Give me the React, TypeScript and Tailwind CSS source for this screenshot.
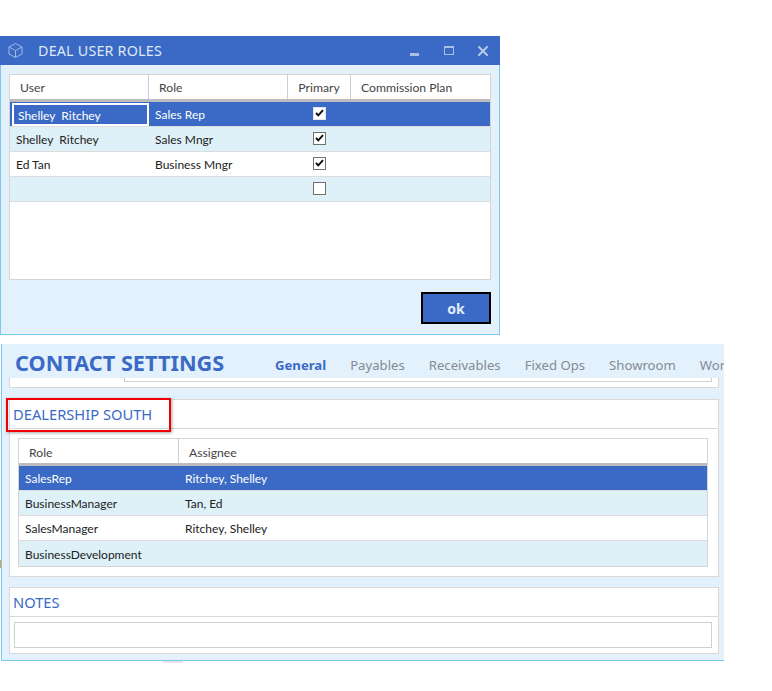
import React from "react";
import { X } from "lucide-react";

const font = { fontFamily: '"Noto Sans", sans-serif' };

const dealRows = [
  { user: "Shelley  Ritchey", role: "Sales Rep", primary: true },
  { user: "Shelley  Ritchey", role: "Sales Mngr", primary: true },
  { user: "Ed Tan", role: "Business Mngr", primary: true },
  { user: "", role: "", primary: false },
];

const contactRows = [
  { role: "SalesRep", assignee: "Ritchey, Shelley" },
  { role: "BusinessManager", assignee: "Tan, Ed" },
  { role: "SalesManager", assignee: "Ritchey, Shelley" },
  { role: "BusinessDevelopment", assignee: "" },
];

const rowBg = (i: number) =>
  i === 0 ? "bg-[#3a6ac5] text-white" : i % 2 === 1 ? "bg-[#def0f8] text-[#222]" : "bg-white text-[#222]";

const Check = ({ on, dark }: { on: boolean; dark: boolean }) => (
  <div className={`flex h-[13px] w-[13px] items-center justify-center border bg-white ${dark ? "border-[#dfe6f3]" : "border-[#707070]"}`}>
    {on && (
      <svg width="9" height="8" viewBox="0 0 9 8">
        <path d="M1 4 L3.3 6.4 L8 1.2" fill="none" stroke="#111" strokeWidth="2" />
      </svg>
    )}
  </div>
);

const HeaderCell = ({ className, children }: { className: string; children: React.ReactNode }) => (
  <div className={`flex h-[24px] items-center whitespace-pre border-r border-[#cfcfcf] font-['Lato',sans-serif] text-[12.2px] text-[#444] ${className}`}>{children}</div>
);

export default function App() {
  return (
    <div className="relative h-[691px] w-[772px] overflow-hidden bg-white pt-[36px]" style={font}>
      {/* deal user roles window */}
      <div className="h-[299px] w-[500px] border-x border-b border-[#7cc8ee] bg-[#e3f1fd]">
        <div className="-mx-px flex h-[29px] items-center bg-[#3a6ac5] pl-[7px] text-white">
          <svg width="17" height="17" viewBox="0 0 17 17" fill="none" stroke="#a3b9e3" strokeWidth="1">
            <path d="M8.5 1.5 L15 5 V12 L8.5 15.5 L2 12 V5 Z M2 5 L8.5 8.5 L15 5 M8.5 8.5 V15.5" />
          </svg>
          <span className="ml-[14px] text-[14.3px] tracking-[0.2px] text-[#dfe8f7]">DEAL USER ROLES</span>
          <div className="ml-auto mt-[7px] h-[3px] w-[9px] bg-[#a9bfe6]" />
          <div className="ml-[25px] h-[9px] w-[10px] border border-t-2 border-[#a9bfe6]" />
          <X className="ml-[21px] mr-[9px] h-[16px] w-[16px] text-[#b9cbea]" strokeWidth={3} />
        </div>
        <div className="mx-[8px] mt-[9px] h-[206px] border border-[#d4d4d4] bg-white">
          <div className="flex border-b-[3px] border-[#bdbdbd]">
            <HeaderCell className="w-[139px] pl-[10px] pt-[2px]">User</HeaderCell>
            <HeaderCell className="w-[139px] pl-[10px] pt-[2px]">Role</HeaderCell>
            <HeaderCell className="w-[63px] justify-center pt-[2px]">Primary</HeaderCell>
            <HeaderCell className="flex-1 border-r-0 pl-[10px] pt-[2px]">Commission Plan</HeaderCell>
          </div>
          {dealRows.map((r, i) => (
            <div key={i} className={`flex h-[25px] items-center whitespace-pre border-b border-[#dcdcdc] font-['Lato',sans-serif] text-[12px] ${rowBg(i)}`}>
              <div className="h-full w-[139px] pl-[6px]">
                {i === 0 ? (
                  <div className="ml-[-4px] mt-px flex h-[23px] w-[137px] items-center border-2 border-white pl-[4px] pt-[2px]">{r.user}</div>
                ) : (
                  <div className="flex h-full items-center pt-[2px]">{r.user}</div>
                )}
              </div>
              <div className="mt-[2px] w-[139px] pl-[6px]">{r.role}</div>
              <div className="mb-[2px] flex w-[63px] justify-center">
                <Check on={r.primary} dark={i === 0} />
              </div>
            </div>
          ))}
        </div>
        <button className="ml-[420px] mt-[12px] flex h-[32px] w-[70px] items-center justify-center border-2 border-black bg-[#3a6ac5] pt-px text-[14px] font-bold text-[#e3edf9]">
          ok
        </button>
      </div>

      {/* contact settings window */}
      <div className="ml-px mt-[9px] h-[317px] w-[723px] overflow-hidden border-b border-l border-[#7cc8ee] bg-[#e3f1fd]">
        <div className="flex h-[34px] items-center pl-[13px]">
          <span className="mt-[4px] w-[260px] shrink-0 text-[21.7px] font-bold leading-none text-[#3a6ac5]">CONTACT SETTINGS</span>
          <div className="mt-[10px] flex gap-[24px] whitespace-nowrap text-[13.15px] text-[#858a93]">
            <span className="font-bold text-[#3a6ac5]">General</span>
            <span>Payables</span>
            <span>Receivables</span>
            <span>Fixed Ops</span>
            <span>Showroom</span>
            <span>Wor</span>
          </div>
        </div>

        <div className="ml-[7px] h-[10px] w-[710px] border-x border-b border-[#d9d9d9] bg-white">
          <div className="ml-[114px] mr-[6px] h-[4px] border-x border-b border-[#d0d0d0]" />
        </div>

        <div className="ml-[7px] mt-[11px] h-[178px] w-[710px] border border-[#d9d9d9] bg-white">
          <div className="flex h-[29px] items-center border-b border-[#d9d9d9] pl-[3px] text-[14.7px] text-[#3a6ac5]">DEALERSHIP SOUTH</div>
          <div className="ml-[8px] mt-[9px] w-[690px] border border-[#d4d4d4]">
            <div className="flex border-b-[3px] border-[#bdbdbd]">
              <HeaderCell className="w-[160px] pl-[10px] pt-[4px]">Role</HeaderCell>
              <HeaderCell className="flex-1 border-r-0 pl-[10px] pt-[4px]">Assignee</HeaderCell>
            </div>
            {contactRows.map((r, i) => (
              <div key={r.role} className={`flex h-[25px] items-center border-b border-[#dcdcdc] font-['Lato',sans-serif] text-[12px] last:border-b-0 ${rowBg(i)}`}>
                <div className="mt-[2px] w-[160px] pl-[6px]">{r.role}</div>
                <div className="mt-[2px] pl-[6px]">{r.assignee}</div>
              </div>
            ))}
          </div>
        </div>

        <div className="ml-[7px] mt-[10px] h-[67px] w-[710px] border border-[#d9d9d9] bg-white">
          <div className="flex h-[29px] items-center border-b border-[#d9d9d9] pl-[3px] text-[14.7px] text-[#3a6ac5]">NOTES</div>
          <div className="ml-[4px] mr-[6px] mt-[5px] h-[26px] border border-[#d0d0d0]" />
        </div>
      </div>

      {/* annotation and stray marks */}
      <div className="absolute left-[6px] top-[398px] h-[34px] w-[165px] border-2 border-[#f00000] shadow-[1px_1px_3px_rgba(0,0,0,0.35)]" />
      <div className="absolute left-0 top-[560px] h-[8px] w-px bg-[#e8a33c]" />
      <div className="absolute left-[163px] top-[661px] h-[2px] w-[20px] bg-[#e6e6e6]" />
    </div>
  );
}
